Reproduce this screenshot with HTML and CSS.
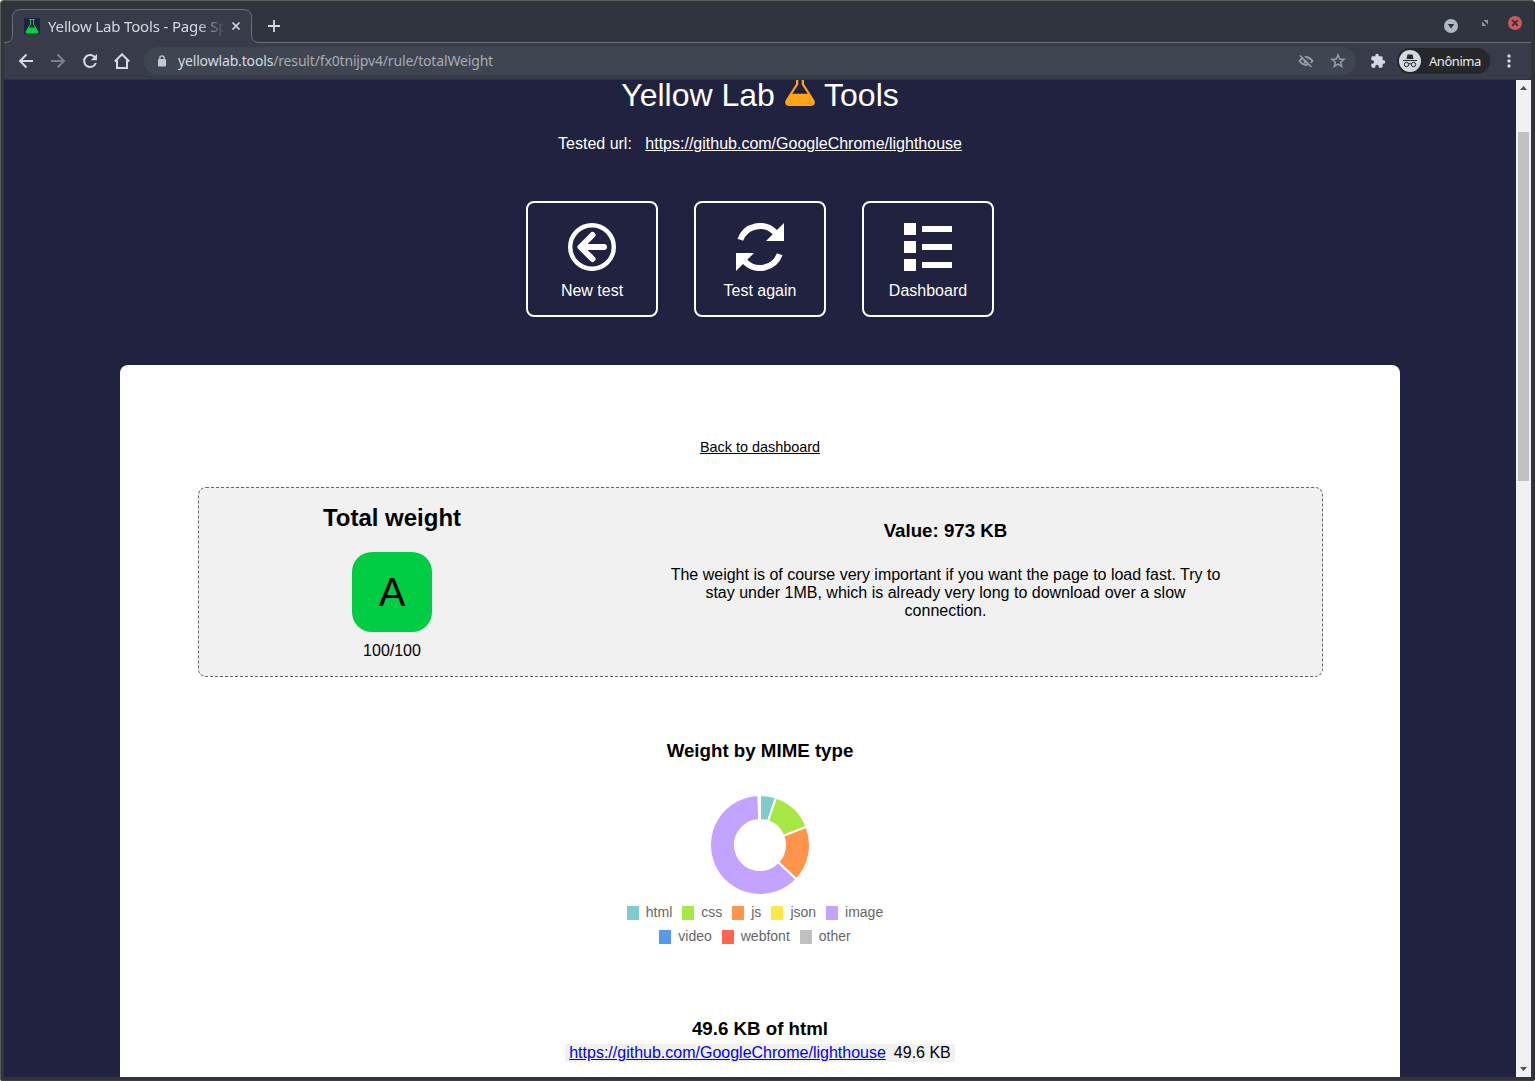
FILE: index.html
```
<!DOCTYPE html>
<html lang="en">
<head>
<meta charset="utf-8">
<title>Yellow Lab Tools - Page Speed</title>
<link rel="stylesheet" href="styles.css">
</head>
<body>
<div class="window">
  <header class="tabstrip">
    <svg class="tab-shape" width="260" height="41" viewBox="0 0 260 41"><path d="M0 40.500C6 40.500 8.500 38 8.500 32.500V15.500Q8.500 7.500 16.500 7.500H239.500Q247.500 7.500 247.500 15.500V32.500C247.500 38 250 40.500 256 40.500H260V41H0Z" fill="#383c4a"/><path d="M0 40.500C6 40.500 8.500 38 8.500 32.500V15.500Q8.500 7.500 16.500 7.500H239.500Q247.500 7.500 247.500 15.500V32.500C247.500 38 250 40.500 256 40.500H260" fill="none" stroke="#6b6f78"/></svg>
    <div class="tab">
      <svg class="favicon" width="16" height="16" viewBox="0 0 16 16"><rect width="16" height="16" fill="#212240"/><path d="M5 1.500H11M6.500 1.500V6L2.500 13.500M9.500 1.500V6L13.500 13.500" fill="none" stroke="#00d042"/><path d="M4.300 9.500H11.700L14.300 13.500Q14.800 15.500 13 15.500H3Q1.200 15.500 1.700 13.500Z" fill="#00d042"/></svg>
      <span class="tab-title">Yellow Lab Tools - Page Sp</span>
      <svg width="10" height="10" viewBox="0 0 10 10"><path d="M1.500 1.500L8.500 8.500M8.500 1.500L1.500 8.500" stroke="#d3dae3" stroke-width="1.700"/></svg>
    </div>
    <svg class="new-tab" width="14" height="14" viewBox="0 0 14 14"><path d="M7 1V13M1 7H13" stroke="#d3dae3" stroke-width="1.800"/></svg>
    <div class="window-buttons">
      <svg width="14" height="14" viewBox="0 0 14 14" class="low"><circle cx="7" cy="7" r="7" fill="#afb8c5"/><path d="M3.800 5H10.200L7 9.800Z" fill="#2f343f"/></svg>
      <svg class="restore" width="6" height="6" viewBox="0 0 6 6"><path d="M1.500 0H6V4.500ZM0 1.500V6H4.500Z" fill="#90949d"/></svg>
      <svg width="14" height="14" viewBox="0 0 14 14"><circle cx="7" cy="7" r="7" fill="#cc575d"/><path d="M4.200 4.200L9.800 9.800M9.800 4.200L4.200 9.800" stroke="#2f343f" stroke-width="1.800"/></svg>
    </div>
  </header>
  <nav class="toolbar">
    <div class="nav-icons">
      <svg width="16" height="16" viewBox="0 0 16 16"><path d="M15 8H2.500M8.500 1.500L2 8L8.500 14.500" fill="none" stroke="#d3dae3" stroke-width="2"/></svg>
      <svg width="16" height="16" viewBox="0 0 16 16"><path d="M1 8H13.500M7.500 1.500L14 8L7.500 14.500" fill="none" stroke="#7b7f8a" stroke-width="2"/></svg>
      <svg width="16" height="16" viewBox="0 0 16 16"><path d="M13.200 4.800A6 6 0 1 0 13.800 10" fill="none" stroke="#d3dae3" stroke-width="2"/><path d="M15 1V7.200H8.800Z" fill="#d3dae3"/></svg>
      <svg width="16" height="16" viewBox="0 0 16 16"><path d="M0.800 8.500L8 1.300L15.200 8.500M3 7V15H13V7" fill="none" stroke="#d3dae3" stroke-width="2"/></svg>
    </div>
    <div class="omnibox">
      <svg width="8" height="12" viewBox="0 0 8 12"><path d="M1.800 5V3Q1.800 0.800 4 0.800T6.200 3V5" fill="none" stroke="#c3c9d2" stroke-width="1.300"/><rect y="4" width="8" height="7.500" rx="1" fill="#c3c9d2"/></svg>
      <span class="address"><b>yellowlab.tools</b>/result/fx0tnijpv4/rule/totalWeight</span>
      <svg class="eye" width="16" height="16" viewBox="0 0 16 16"><path d="M1.500 8Q8 0 14.500 8Q8 16 1.500 8Z" fill="none" stroke="#999da6" stroke-width="1.800"/><circle cx="8" cy="8" r="2.500" fill="#999da6"/><path d="M3 1.500L14.500 13" stroke="#414550" stroke-width="2"/><path d="M2 2.500L13.500 14" stroke="#999da6" stroke-width="1.600"/></svg>
      <svg width="16" height="16" viewBox="0 0 16 16"><path d="M8 2L9.700 6L14 6.400L10.700 9.200L11.700 13.500L8 11.200L4.300 13.500L5.300 9.200L2 6.400L6.300 6Z" fill="none" stroke="#999da6" stroke-width="1.500"/></svg>
    </div>
    <svg class="puzzle" width="16" height="16" viewBox="0 0 24 24"><path d="M20.500 11H19V7a2 2 0 0 0-2-2h-4V3.500a2.500 2.500 0 0 0-5 0V5H4a2 2 0 0 0-2 2v3.800h1.500a2.700 2.700 0 0 1 0 5.400H2V20a2 2 0 0 0 2 2h3.800v-1.500a2.700 2.700 0 0 1 5.400 0V22H17a2 2 0 0 0 2-2v-4h1.500a2.500 2.500 0 0 0 0-5Z" fill="#d3dae3"/></svg>
    <div class="profile">
      <svg width="22" height="22" viewBox="0 0 22 22"><circle cx="11" cy="11" r="11" fill="#d3dae3"/><path d="M7.500 9L8.500 4.600Q9 4 11 4.800Q13 4 13.500 4.600L14.500 9Z" fill="#25272b"/><path d="M4 10.500H18" stroke="#25272b" stroke-width="1"/><path d="M9.800 14Q11 13.200 12.200 14" fill="none" stroke="#25272b"/><circle cx="7.500" cy="14.500" r="2.200" fill="none" stroke="#25272b"/><circle cx="14.500" cy="14.500" r="2.200" fill="none" stroke="#25272b"/></svg>
      <span>Anônima</span>
    </div>
    <svg class="kebab" width="4" height="14" viewBox="0 0 4 14"><g fill="#d3dae3"><circle cx="2" cy="2" r="1.700"/><circle cx="2" cy="7" r="1.700"/><circle cx="2" cy="12" r="1.700"/></g></svg>
  </nav>
  <div class="viewport">
    <main class="page">
      <h1>Yellow Lab <svg width="30" height="34" viewBox="0 0 30 34"><path d="M11 0V12L0.800 28Q-1.500 34 4.500 34H25.500Q31.500 34 29.200 28L19 12V0H16.700V12.500L22.800 21.700H7.200L13.300 12.500V0Z" fill="#ffa319"/></svg> Tools</h1>
      <p class="tested">Tested url: <a>https://github.com/GoogleChrome/lighthouse</a></p>
      <div class="actions">
        <a class="action"><svg width="48" height="48" viewBox="0 0 48 48" fill="none" stroke="#fff"><circle cx="24" cy="24" r="21.800" stroke-width="4.400"/><path d="M36 24H13M24.500 12L12.500 24L24.500 36" stroke-width="6" stroke-linecap="round" stroke-linejoin="round"/></svg>New test</a>
        <a class="action"><svg width="48" height="48" viewBox="0 0 48 48"><g fill="none" stroke="#fff" stroke-width="6"><path d="M4.300 16.800A21 21 0 0 1 38.850 9.150L41 11.500"/><path d="M43.700 31.200A21 21 0 0 1 9.150 38.850L7 36.500"/></g><path d="M48 0V18H30ZM0 48V30H18Z" fill="#fff"/></svg>Test again</a>
        <a class="action"><svg width="48" height="48" viewBox="0 0 48 48"><path d="M0 0H12V12H0ZM18 3H48V9H18ZM0 18H12V30H0ZM18 21H48V27H18ZM0 36H12V48H0ZM18 39H48V45H18Z" fill="#fff"/></svg>Dashboard</a>
      </div>
      <section class="card">
        <a class="back">Back to dashboard</a>
        <div class="rule">
          <div class="score">
            <h2>Total weight</h2>
            <div class="grade">A</div>
            <div>100/100</div>
          </div>
          <div class="detail">
            <h3>Value: 973 KB</h3>
            <p>The weight is of course very important if you want the page to load fast. Try to stay under 1MB, which is already very long to download over a slow connection.</p>
          </div>
        </div>
        <h3>Weight by MIME type</h3>
        <svg class="donut" width="102" height="102" viewBox="-51 -51 102 102" stroke="#fff" stroke-width="2">
          <path d="M0 -50A50 50 0 0 1 16 -47.370L8 -23.690A25 25 0 0 0 0 -25Z" fill="#7ecccc"/>
          <path d="M16 -47.370A50 50 0 0 1 46.600 -18.120L23.300 -9.060A25 25 0 0 0 8 -23.690Z" fill="#a7e846"/>
          <path d="M46.600 -18.120A50 50 0 0 1 36.330 34.350L18.170 17.180A25 25 0 0 0 23.300 -9.060Z" fill="#ff944d"/>
          <path d="M36.330 34.350A50 50 0 1 1 -1.700 -49.970L-0.850 -24.990A25 25 0 1 0 18.170 17.180Z" fill="#c2a3ff"/>
        </svg>
        <ul class="legend">
          <li><i class="html"></i>html</li><li><i class="css"></i>css</li><li><i class="js"></i>js</li><li><i class="json"></i>json</li><li><i class="image"></i>image</li>
        </ul>
        <ul class="legend">
          <li><i class="video"></i>video</li><li><i class="webfont"></i>webfont</li><li><i class="other"></i>other</li>
        </ul>
        <h3 class="group-title">49.6 KB of html</h3>
        <div class="file"><a>https://github.com/GoogleChrome/lighthouse</a><span>49.6 KB</span></div>
      </section>
    </main>
    <div class="scrollbar">
      <svg width="7" height="4" viewBox="0 0 7 4"><path d="M3.500 0L7 4H0Z" fill="#505050"/></svg>
      <div class="thumb"></div>
      <svg class="down" width="7" height="4" viewBox="0 0 7 4"><path d="M3.500 4L7 0H0Z" fill="#505050"/></svg>
    </div>
  </div>
</div>
</body>
</html>
```
FILE: styles.css
```
* { box-sizing: border-box; }
body { margin: 0; background: #fff; overflow: hidden; font: 16px/18px "Liberation Sans", Arial, sans-serif; }
h1, h2, h3, p, ul { margin: 0; padding: 0; }
svg { display: block; flex: none; }

.window { width: 1535px; height: 1081px; padding: 1px 3px 3px; border: 1px solid #5a5c5c; border-right-color: #2b2d33; border-bottom-color: #3c3e44; border-radius: 4px 4px 2px 2px; background: #2f343f; display: flex; flex-direction: column; }

.tabstrip { position: relative; height: 41px; flex: none; display: flex; border-bottom: 1px solid #6b6f78; font-family: "Noto Sans", sans-serif; }
.tab-shape { position: absolute; left: 0; top: 0; }
.tab { position: relative; width: 240px; margin-left: 8px; padding: 7px 10px 0 12px; display: flex; align-items: center; }
.tab-title { width: 176px; margin: 0 7px 0 8px; font-size: 15px; line-height: 22px; letter-spacing: -0.16px; color: #d3dae3; white-space: nowrap; overflow: hidden; -webkit-mask-image: linear-gradient(90deg, #000 150px, transparent 178px); mask-image: linear-gradient(90deg, #000 150px, transparent 178px); }
.new-tab { position: relative; margin: 17px 0 0 15px; }
.window-buttons { margin: 14px 9px 0 auto; height: 14px; display: flex; align-items: center; gap: 20px; }
.window-buttons .low { margin: 6px 4px 0 0; }

.toolbar { height: 37px; flex: none; display: flex; align-items: center; background: #383c4a; border-bottom: 1px solid #2f3340; font-family: "Noto Sans", sans-serif; }
.nav-icons { display: flex; gap: 16px; padding-left: 14px; }
.omnibox { width: 1212px; height: 28px; margin-left: 14px; border-radius: 14px; padding: 0 10px 0 14px; background: #404552; display: flex; align-items: center; }
.address { margin-left: 12px; font-size: 14px; letter-spacing: -0.16px; color: #a7abb3; }
.address b { font-weight: 400; color: #d3dae3; }
.eye { margin: 0 16px 0 auto; }
.puzzle { margin-left: 14px; }
.profile { width: 93px; height: 26px; margin-left: 11px; padding-left: 2px; border-radius: 13px; background: #25272b; display: flex; align-items: center; gap: 8px; font-size: 13px; letter-spacing: -0.45px; color: #e8eaed; }
.kebab { margin-left: 17px; }

.viewport { flex: 1; min-height: 0; display: flex; overflow: hidden; }
.page { width: 1512px; overflow: hidden; background: #212240; color: #fff; text-align: center; display: flex; flex-direction: column; align-items: center; }
h1 { margin-top: -3px; height: 36px; font-size: 32px; line-height: 36px; font-weight: 400; white-space: nowrap; }
h1 svg { display: inline-block; vertical-align: baseline; margin: -10px 1px 0; }
.tested { margin-top: 22px; white-space: nowrap; }
.tested a { margin-left: 9px; text-decoration: underline; }
.actions { display: flex; gap: 36px; margin-top: 48px; flex: none; }
.action { width: 132px; height: 116px; padding-top: 20px; border: 2px solid #fff; border-radius: 8px; display: flex; flex-direction: column; align-items: center; gap: 11px; }

.card { width: 1280px; height: 900px; flex: none; margin-top: 48px; border-radius: 8px; background: #fff; color: #000; display: flex; flex-direction: column; align-items: center; }
.back { margin-top: 73px; font-size: 14.4px; text-decoration: underline; }
.rule { width: 1125px; height: 190px; margin: 31px 0 63px; border: 1px dashed #666; border-radius: 8px; background: #f1f1f1; display: flex; flex: none; }
.score { width: 387px; padding-top: 16px; display: flex; flex-direction: column; align-items: center; }
h2 { font-size: 24px; line-height: 28px; }
.grade { width: 80px; height: 80px; margin: 20px 0 10px; border-radius: 20px; background: #00cc44; font-size: 40px; line-height: 80px; }
.detail { width: 562px; margin-left: 79px; padding-top: 32px; }
h3 { font-size: 18.72px; line-height: 22px; }
.detail p { margin-top: 24px; }
.donut { margin-top: 32px; }
.legend { display: flex; list-style: none; gap: 10px; height: 24px; font-size: 14px; line-height: 18px; color: #666; margin-right: 10px; }
.donut + .legend { margin-top: 7px; }
.legend li { display: flex; align-items: center; height: 18px; }
.legend i { width: 12px; height: 14px; margin: 1px 7px 0 0; }
.html { background: #7ecccc; } .css { background: #a7e846; } .js { background: #ff944d; } .json { background: #ffe74a; }
.image { background: #c2a3ff; } .video { background: #5999eb; } .webfont { background: #ff6452; } .other { background: #c0c0c0; }
.group-title { margin-top: 67px; }
.file { display: flex; gap: 8px; margin-top: 4px; padding: 0 4px; background: #f1f1f1; }
.file a { color: #0000ee; text-decoration: underline; }

.scrollbar { width: 15px; background: #f1f1f1; display: flex; flex-direction: column; align-items: center; padding: 6px 0 6px; }
.thumb { width: 11px; height: 349px; margin-top: 42px; background: #c1c1c1; }
.down { margin-top: auto; }
```
